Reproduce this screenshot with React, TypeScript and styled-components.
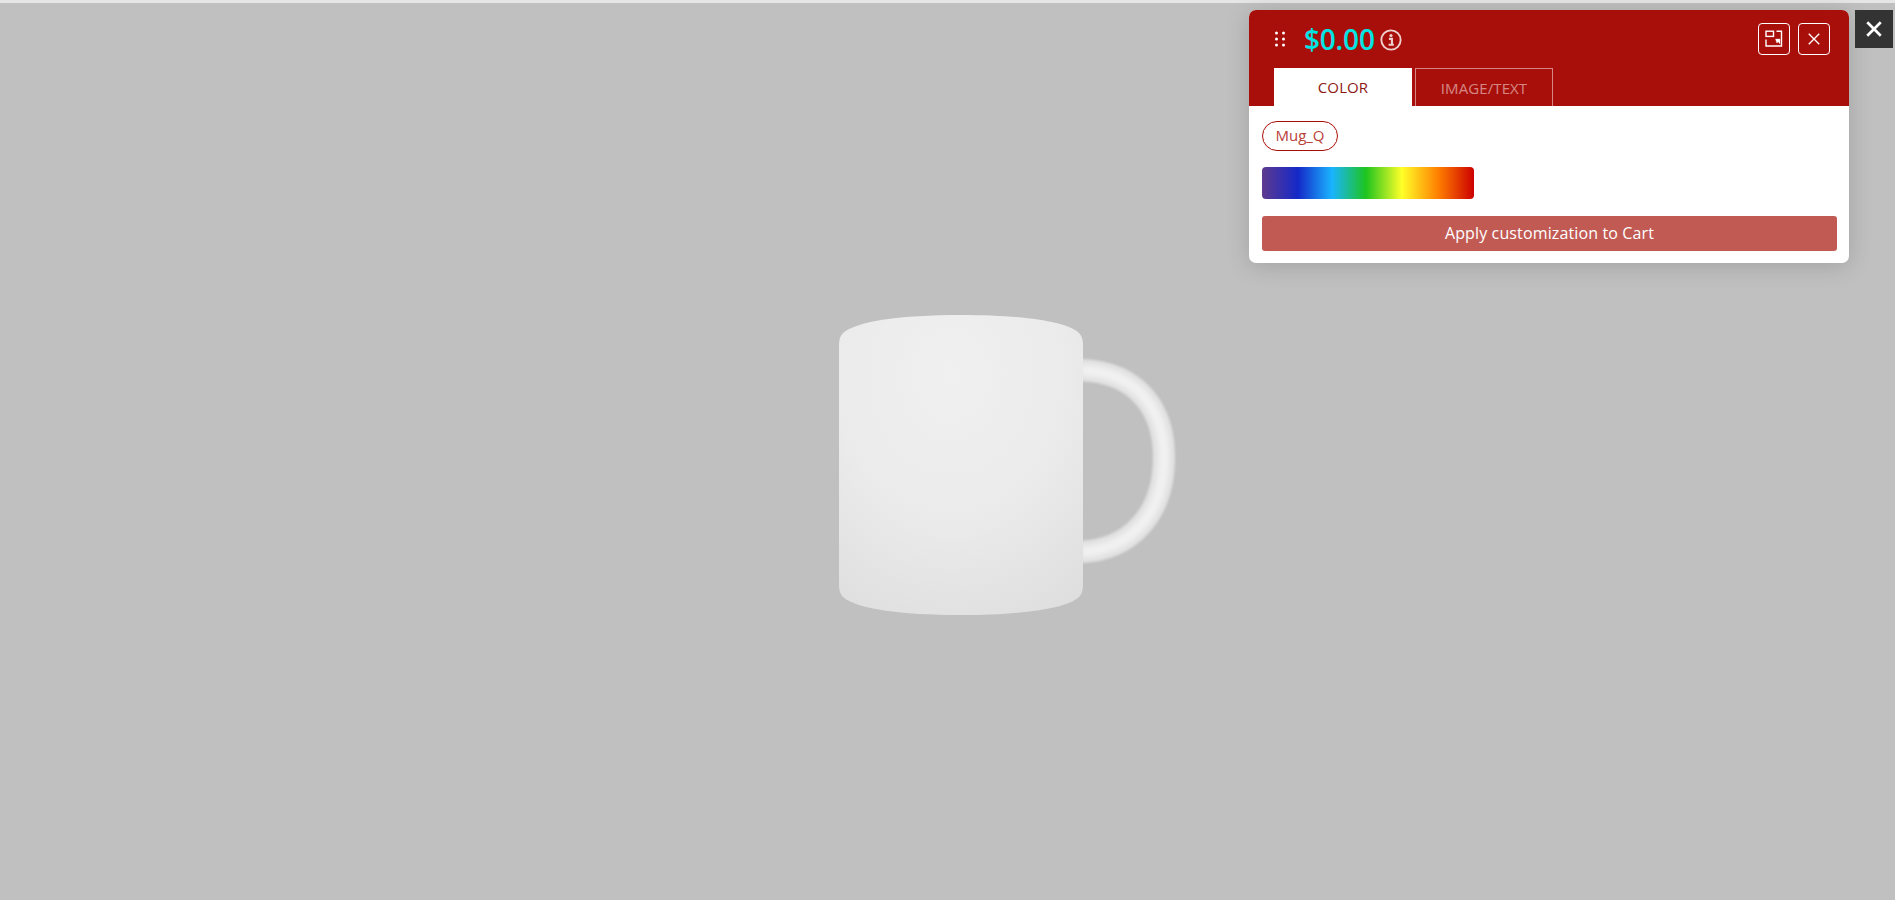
import styled, { createGlobalStyle } from 'styled-components'

const GlobalStyle = createGlobalStyle`
  html, body {
    margin: 0;
    padding: 0;
    height: 100%;
    overflow: hidden;
    font-family: "Open Sans", "Liberation Sans", sans-serif;
  }
`

const Stage = styled.div`
  position: relative;
  box-sizing: border-box;
  width: 100%;
  height: 900px;
  padding-top: 27px;
  background-color: #c0c0c0;
  border-top: 3px solid #e6e6e6;
  display: flex;
  align-items: center;
  justify-content: center;
`

const MugSvg = styled.svg`
  display: block;
  width: 475px;
  height: 330px;
`

const ExitButton = styled.button`
  position: absolute;
  top: 7px;
  right: 2px;
  width: 38px;
  height: 38px;
  padding: 0;
  border: 0;
  background-color: #333333;
  color: #ffffff;
  display: flex;
  align-items: center;
  justify-content: center;
`

const Panel = styled.div`
  position: absolute;
  top: 7px;
  right: 46px;
  width: 600px;
  height: 253px;
  background-color: #ffffff;
  border-radius: 7px;
  box-shadow: 0 3px 24px rgba(0, 0, 0, 0.16);
  overflow: hidden;
  display: flex;
  flex-direction: column;
`

const PanelHeader = styled.div`
  background-color: #a90f0a;
  height: 96px;
  display: flex;
  flex-direction: column;
  justify-content: space-between;
`

const HeaderTop = styled.div`
  display: flex;
  align-items: center;
  padding: 13px 19px 0 26px;
`

const DragHandle = styled.svg`
  width: 10px;
  height: 16px;
  color: #ffffff;
  margin-right: 19px;
`

const Price = styled.span`
  font-size: 28px;
  line-height: 32px;
  font-weight: 600;
  letter-spacing: -0.2px;
  color: #00e4e4;
`

const InfoIcon = styled.svg`
  width: 22px;
  height: 22px;
  margin-left: 5px;
  margin-top: 2px;
  opacity: 0.8;
`

const HeaderActions = styled.div`
  margin-left: auto;
  display: flex;
  gap: 8px;
`

const IconButton = styled.button`
  box-sizing: border-box;
  width: 32px;
  height: 32px;
  padding: 0;
  background: transparent;
  border: 1px solid #ffffff;
  border-radius: 4px;
  color: #ffffff;
  display: flex;
  align-items: center;
  justify-content: center;
`

const Tabs = styled.div`
  display: flex;
  gap: 3px;
  padding-left: 25px;
`

const Tab = styled.div<{ $active?: boolean }>`
  box-sizing: border-box;
  width: 138px;
  height: 38px;
  display: flex;
  align-items: center;
  justify-content: center;
  font-size: 15px;
  font-weight: 500;
  letter-spacing: 0.1px;
  background-color: ${(p) => (p.$active ? '#ffffff' : 'transparent')};
  color: ${(p) => (p.$active ? '#8e1a14' : 'rgba(255, 255, 255, 0.5)')};
  border: ${(p) => (p.$active ? '0' : '1px solid rgba(255, 255, 255, 0.5)')};
  border-bottom: 0;
`

const PanelBody = styled.div`
  padding: 15px 10px 0 13px;
  display: flex;
  flex-direction: column;
  align-items: flex-start;
`

const Chip = styled.div`
  box-sizing: border-box;
  height: 30px;
  width: 76px;
  padding-bottom: 3px;
  border: 1px solid #a80e06;
  border-radius: 15px;
  font-size: 15px;
  color: #b8403a;
  display: flex;
  align-items: center;
  justify-content: center;
`

const Spectrum = styled.div`
  width: 212px;
  height: 32px;
  margin-top: 16px;
  border-radius: 4px;
  background: linear-gradient(
    to right,
    #5f3a8f 0%,
    #1429c8 17%,
    #1ab4ff 33%,
    #1ec41e 49%,
    #ffff28 66%,
    #ff8000 83%,
    #cc0000 100%
  );
`

const ApplyButton = styled.button`
  width: 575px;
  height: 35px;
  margin-top: 17px;
  padding: 0 0 1px;
  border: 0;
  border-radius: 3px;
  background-color: #c25a54;
  color: #ffffff;
  font-family: inherit;
  font-size: 16px;
  font-weight: 500;
  letter-spacing: 0.13px;
`

const CloseGlyph = ({ size, weight }: { size: number; weight: number }) => (
  <svg width={size} height={size} viewBox="0 0 16 16" fill="none" stroke="currentColor" strokeWidth={weight}>
    <path d="M2 2 L14 14 M14 2 L2 14" />
  </svg>
)

// handle is a soft tube: dim outer stroke with a blurred bright core
const HANDLE = 'M1080 370 C1140 372 1164 412 1164 457 C1164 515 1130 550 1080 552'
const BODY =
  'M839 345 C839 340 840 336 843 333 C857 321 900 315 961 315 C1020 315 1066 321 1079 333 C1082 336 1083 340 1083 345 L1083 585 C1083 590 1082 594 1079 597 C1066 609 1020 615 961 615 C900 615 857 609 843 597 C840 594 839 590 839 585 Z'

const Mug = () => (
  <MugSvg viewBox="710 300 475 330">
    <defs>
      <radialGradient id="mugShade" cx="0.46" cy="0.2" r="0.95">
        <stop offset="0" stopColor="#f0f0f0" />
        <stop offset="0.5" stopColor="#ebebeb" />
        <stop offset="1" stopColor="#dddddd" />
      </radialGradient>
      <filter id="soft" x="-20%" y="-20%" width="140%" height="140%">
        <feGaussianBlur stdDeviation="3" />
      </filter>
      <filter id="edge" x="-20%" y="-20%" width="140%" height="140%">
        <feGaussianBlur stdDeviation="0.8" />
      </filter>
    </defs>
    <path d={HANDLE} fill="none" stroke="#dedede" strokeWidth="22" filter="url(#edge)" />
    <path d={HANDLE} fill="none" stroke="#f2f2f2" strokeWidth="12" filter="url(#soft)" />
    <path d={BODY} fill="url(#mugShade)" />
  </MugSvg>
)

const App = () => (
  <>
    <GlobalStyle />
    <Stage>
      <Mug />
      <Panel>
        <PanelHeader>
          <HeaderTop>
            <DragHandle viewBox="0 0 10 16" fill="currentColor">
              <circle cx="1.5" cy="2" r="1.5" />
              <circle cx="8.5" cy="2" r="1.5" />
              <circle cx="1.5" cy="8" r="1.5" />
              <circle cx="8.5" cy="8" r="1.5" />
              <circle cx="1.5" cy="14" r="1.5" />
              <circle cx="8.5" cy="14" r="1.5" />
            </DragHandle>
            <Price>$0.00</Price>
            <InfoIcon viewBox="0 0 21 21" fill="none" stroke="#ffffff">
              <circle cx="10.5" cy="10.5" r="9.2" strokeWidth="1.8" />
              <circle cx="10.5" cy="6.2" r="1.5" fill="#ffffff" stroke="none" />
              <path d="M8.5 9.4 H11.4 V14.8 M8.2 15.1 H13.2" strokeWidth="2" />
            </InfoIcon>
            <HeaderActions>
              <IconButton>
                <svg width="18" height="18" viewBox="0 0 18 18" fill="none" stroke="currentColor" strokeWidth="1.4">
                  <rect x="1" y="1.2" width="7.5" height="5.2" />
                  <path d="M11.5 1.2 H16.5 V16 H1 V9.5" />
                  <path d="M10.5 9 L15 9 L15 14 L13.6 11.9 L11.8 13 Z" fill="currentColor" strokeWidth="0.3" />
                </svg>
              </IconButton>
              <IconButton>
                <CloseGlyph size={14} weight={1.6} />
              </IconButton>
            </HeaderActions>
          </HeaderTop>
          <Tabs>
            <Tab $active>COLOR</Tab>
            <Tab>IMAGE/TEXT</Tab>
          </Tabs>
        </PanelHeader>
        <PanelBody>
          <Chip>Mug_Q</Chip>
          <Spectrum />
          <ApplyButton>Apply customization to Cart</ApplyButton>
        </PanelBody>
      </Panel>
      <ExitButton>
        <CloseGlyph size={18} weight={2.4} />
      </ExitButton>
    </Stage>
  </>
)

export default App
